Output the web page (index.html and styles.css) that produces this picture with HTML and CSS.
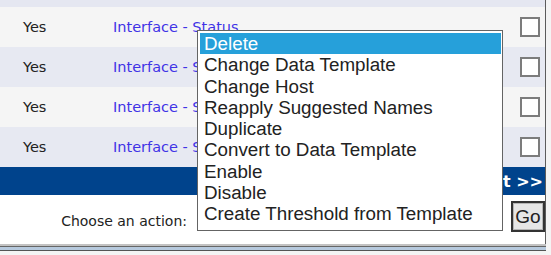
FILE: index.html
```html
<!DOCTYPE html>
<html lang="en">
<head>
    <meta charset="UTF-8">
    <title>Graph Management</title>
    <link rel="stylesheet" href="styles.css">
</head>
<body>

<div class="shot">
    <div class="frame">

        <!-- graph list -->
        <div class="list">
            <div class="strip"></div>
            <div class="row">
                <span class="cell-yes">Yes</span>
                <a class="cell-tpl" href="#">Interface - Status</a>
                <span class="check"></span>
            </div>
            <div class="row alt">
                <span class="cell-yes">Yes</span>
                <a class="cell-tpl" href="#">Interface - Status</a>
                <span class="check"></span>
            </div>
            <div class="row">
                <span class="cell-yes">Yes</span>
                <a class="cell-tpl" href="#">Interface - Status</a>
                <span class="check"></span>
            </div>
            <div class="row alt">
                <span class="cell-yes">Yes</span>
                <a class="cell-tpl" href="#">Interface - Status</a>
                <span class="check"></span>
            </div>
            <div class="nav">
                <a href="#">Next &gt;&gt;</a>
            </div>
        </div>

        <!-- action bar -->
        <div class="actions">
            <label for="drp-action">Choose an action:</label>
            <select id="drp-action" class="action-select">
                <option>Delete</option>
            </select>
            <button class="go">Go</button>
        </div>

        <!-- opened dropdown list -->
        <ul class="dropdown">
            <li class="selected">Delete</li>
            <li>Change Data Template</li>
            <li>Change Host</li>
            <li>Reapply Suggested Names</li>
            <li>Duplicate</li>
            <li>Convert to Data Template</li>
            <li>Enable</li>
            <li>Disable</li>
            <li>Create Threshold from Template</li>
        </ul>

    </div>
    <div class="edge"></div>
</div>

</body>
</html>
```

FILE: styles.css
```css
body {
    margin: 0;
    padding: 0;
    background: #f4f4f4;
    font-family: 'DejaVu Sans', Verdana, sans-serif;
    color: #222;
}

.shot {
    width: 551px;
    height: 255px;
    overflow: hidden;
}

.frame {
    position: relative;
    width: 545px;
    border-right: 1px solid #5c5c5c;
    background: #fff;
}

.strip {
    height: 7px;
    background: #e5e7f1;
}

.row {
    display: flex;
    align-items: center;
    height: 40px;
    background: #f5f5f5;
    font-size: 14.5px;
}

.row.alt {
    background: #e7e9f2;
}

.cell-yes {
    width: 90px;
    padding-left: 23px;
}

.cell-tpl {
    flex: 1;
    color: #3f33e6;
    text-decoration: none;
}

.check {
    width: 16px;
    height: 16px;
    margin-right: 5px;
    border: 2px solid #7c7c7c;
    background: #fff;
}

.nav {
    display: flex;
    justify-content: flex-end;
    align-items: center;
    height: 28px;
    padding-right: 2px;
    background: #00438c;
}

.nav a {
    color: #fff;
    font-weight: bold;
    font-size: 16px;
    text-decoration: none;
}

.actions {
    display: flex;
    align-items: flex-start;
    justify-content: flex-end;
    height: 49px;
    padding-top: 6px;
    box-sizing: border-box;
    font-size: 14px;
}

.actions label {
    margin-top: 12px;
}

.action-select {
    width: 306px;
    height: 24px;
    margin: 4px 8px 0 10px;
}

.go {
    width: 34px;
    height: 31px;
    padding: 0;
    border: 2px solid #333;
    box-shadow: inset 0 0 0 1px #b5b5b5;
    background: #e6e6e6;
    font-family: 'Liberation Sans', Arial, sans-serif;
    font-size: 19px;
    color: #222;
}

.dropdown {
    position: absolute;
    left: 197px;
    top: 30px;
    width: 301px;
    margin: 0;
    padding: 2px 1px 6px 2px;
    list-style: none;
    background: #fff;
    border: 1px solid #646464;
    font-family: 'Liberation Sans', Arial, sans-serif;
    font-size: 18.8px;
    line-height: 21.25px;
    color: #222;
}

.dropdown li {
    padding-left: 4px;
    white-space: nowrap;
}

.dropdown li.selected {
    background: #26a0da;
    color: #fff;
}

.edge {
    width: 546px;
    height: 7px;
    border-top: 2px solid #c2c2c2;
    border-bottom: 1px solid #555;
    box-sizing: border-box;
    background: linear-gradient(#666 0 1px, #b6c9dd 1px);
}
```
